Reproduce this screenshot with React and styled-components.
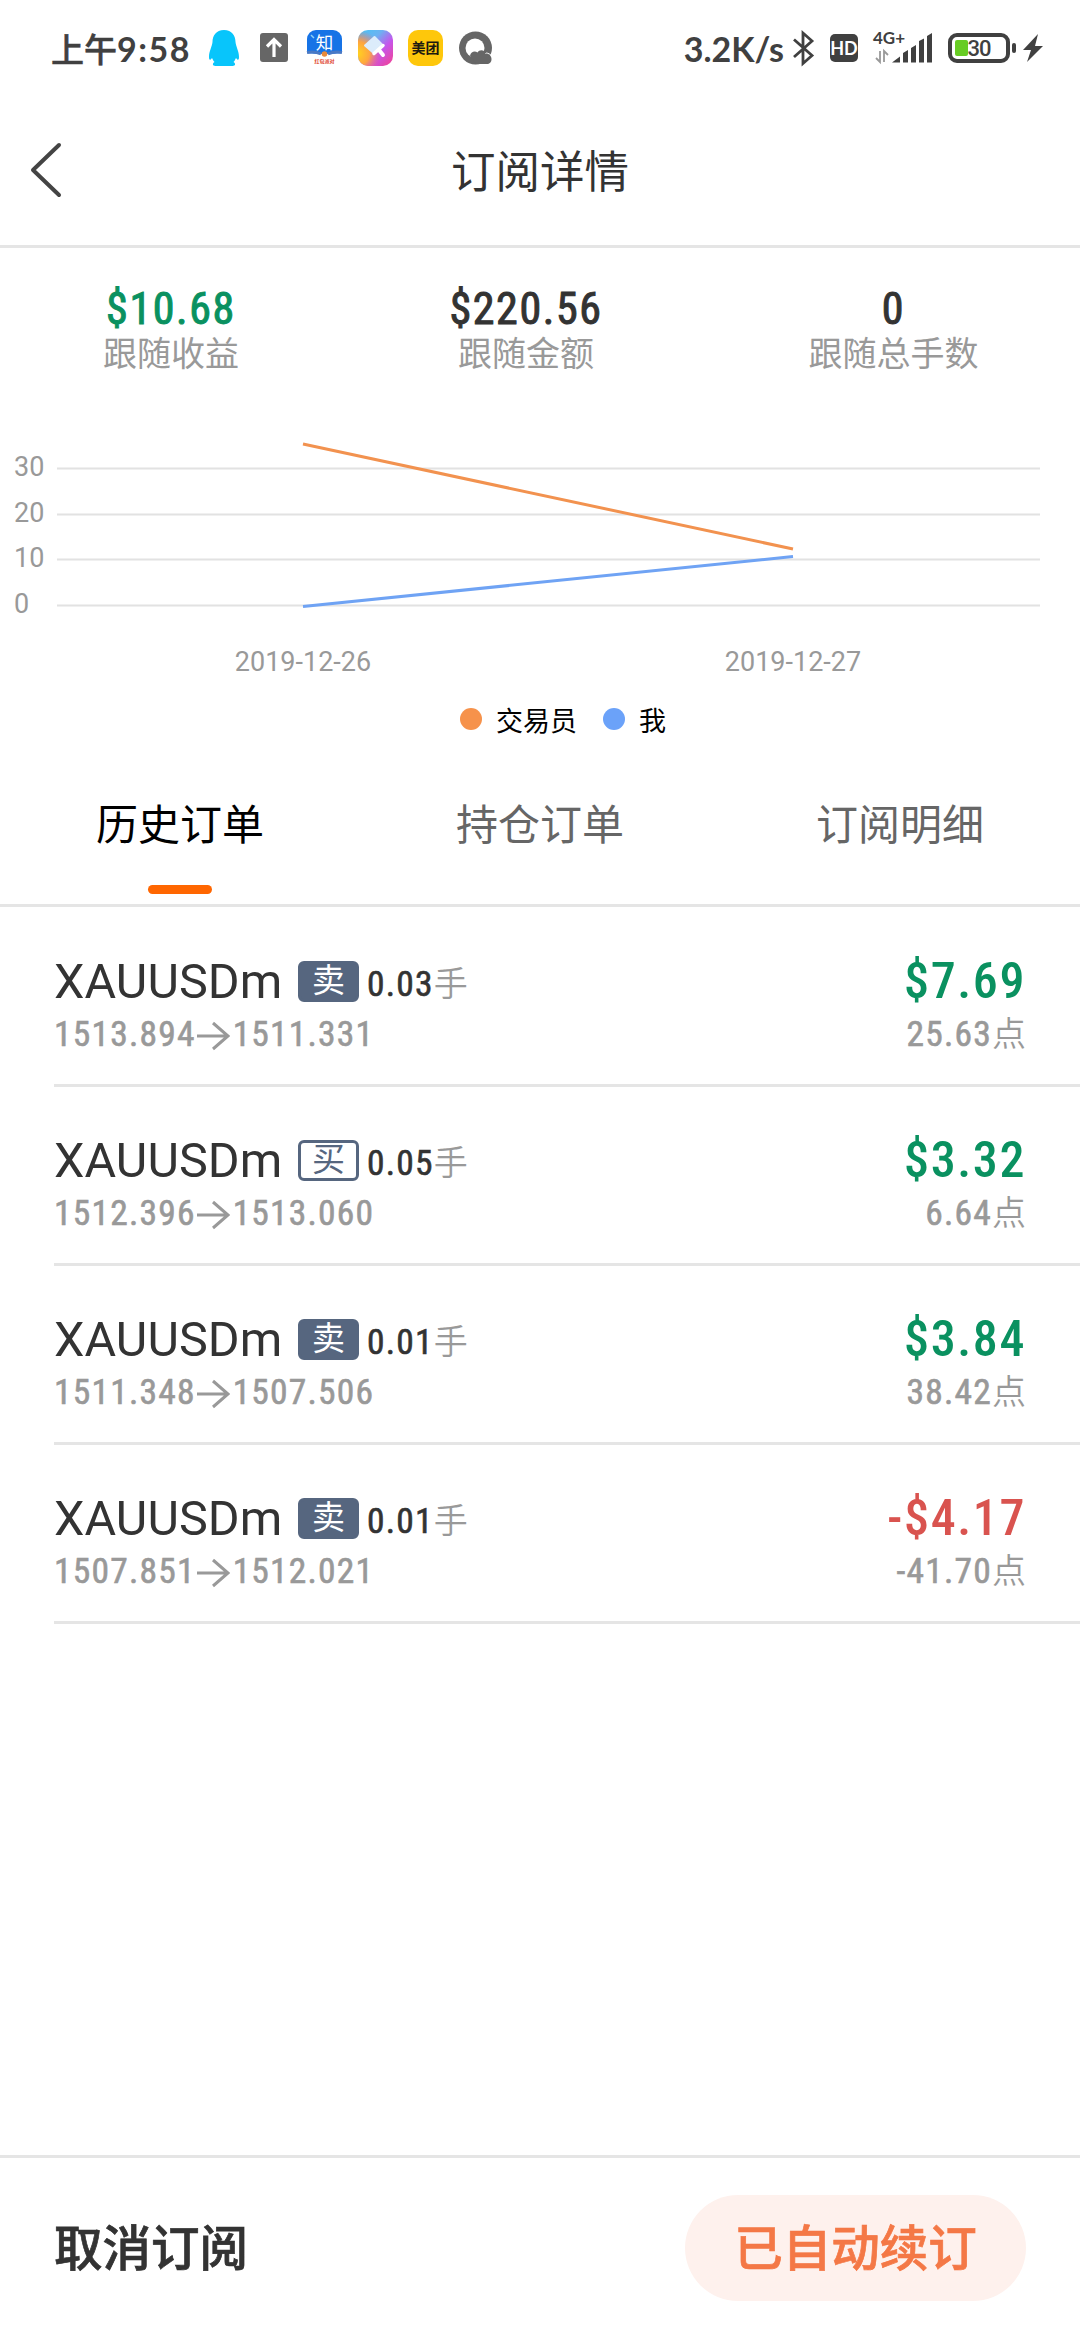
import styled, { createGlobalStyle } from "styled-components";

const GlobalStyle = createGlobalStyle`
  * {
    box-sizing: border-box;
  }

  body {
    margin: 0;
    background: #fff;
    font-family: Roboto, "Noto Sans CJK SC", sans-serif;
    color: #333;
  }
`;

const Page = styled.div`
  display: flex;
  flex-direction: column;
  width: 1080px;
  height: 2340px;
  overflow: hidden;
`;

const StatusBar = styled.div`
  display: flex;
  justify-content: space-between;
  align-items: center;
  height: 96px;
  padding: 0 37px 0 51px;
  font-family: Lato, "Noto Sans CJK SC", sans-serif;
  font-size: 34px;
  font-weight: 700;
  color: #404040;
`;

const StatusGroup = styled.div`
  display: flex;
  align-items: center;
`;

const Clock = styled.span`
  width: 158px;
  white-space: nowrap;
  letter-spacing: 1.5px;

  small {
    font-size: 33px;
    font-weight: 500;
    letter-spacing: 0;
    -webkit-text-stroke: 0.5px currentColor;
  }
`;

const StatusIcon = styled.svg`
  display: block;
  flex: none;
  overflow: visible;
  width: ${(props) => props.$w}px;
  height: ${(props) => props.$h || 36}px;
  margin-left: ${(props) => props.$gap || 0}px;
`;

const Header = styled.div`
  display: grid;
  grid-template-columns: 120px 1fr 120px;
  align-items: center;
  height: 152px;
  padding-bottom: 3px;
  border-bottom: 3px solid #e5e5e5;
`;

const BackIcon = styled.svg`
  width: 40px;
  height: 60px;
  margin: 2px 0 0 26px;
`;

const Title = styled.h1`
  margin: 0 0 2px;
  font-size: 44.5px;
  font-weight: 400;
  text-align: center;
`;

const Number = styled.span`
  font-family: Roboto, "Noto Sans CJK SC", sans-serif;
  font-stretch: 75%;
  font-weight: 400;
  -webkit-text-stroke: 0.6px currentColor;

  small {
    font-size: 34px;
    font-weight: 350;
    letter-spacing: 0;
    color: #999;
    -webkit-text-stroke: 0;
  }
`;

const Stats = styled.div`
  display: grid;
  grid-template-columns: 342px 368px 367px;
  height: 170px;
  padding-top: 36px;
`;

const Stat = styled.div`
  display: flex;
  flex-direction: column;
  align-items: center;
`;

const StatValue = styled(Number)`
  font-size: 44px;
  line-height: 50px;
  letter-spacing: 1.6px;
  -webkit-text-stroke-width: 1px;
  color: ${(props) => props.$color || "#333"};
`;

const StatLabel = styled.span`
  font-size: 34px;
  line-height: 40px;
  color: #999;
`;

const ChartSvg = styled.svg`
  display: block;
  width: 1080px;
  height: 272px;
  font-family: Roboto, sans-serif;
  font-size: 27px;
`;

const Legend = styled.div`
  display: flex;
  justify-content: center;
  align-items: center;
  gap: 26px;
  height: 58px;
  padding-left: 46px;
`;

const LegendItem = styled.div`
  display: flex;
  align-items: center;
  gap: 14px;
  font-size: 27px;
  color: #000;

  &::before {
    content: "";
    width: 22px;
    height: 22px;
    border-radius: 50%;
    background: ${(props) => props.$color};
  }
`;

const Tabs = styled.div`
  display: grid;
  grid-template-columns: repeat(3, 1fr);
  height: 159px;
  border-bottom: 3px solid #e5e5e5;
`;

const Tab = styled.div`
  display: flex;
  flex-direction: column;
  align-items: center;
  justify-content: space-between;
  padding: 48px 0 10px;
  font-size: 42px;
  line-height: 60px;
  color: ${(props) => (props.$active ? "#000" : "#666")};

  &::after {
    content: "";
    width: 64px;
    height: 9px;
    border-radius: 5px;
    background: ${(props) => (props.$active ? "#ff6600" : "transparent")};
  }
`;

const OrderList = styled.div`
  flex: 1;
  padding: 1px 0 0 54px;
`;

const Order = styled.div`
  display: flex;
  justify-content: space-between;
  height: 179px;
  padding: 45px 54px 0 0;
  border-bottom: 3px solid #e5e5e5;
`;

const OrderSide = styled.div`
  display: flex;
  flex-direction: column;
  align-items: ${(props) => (props.$end ? "flex-end" : "flex-start")};
`;

const OrderTop = styled.div`
  display: flex;
  align-items: center;
  height: 56px;
`;

const Symbol = styled.span`
  width: 244px;
  font-size: 48.5px;
  letter-spacing: 0.1px;
`;

const Badge = styled.span`
  display: flex;
  justify-content: center;
  width: 61px;
  height: 41px;
  border: 3px solid #56667f;
  border-radius: 6px;
  font-size: 33px;
  line-height: 33px;
  background: ${(props) => (props.$filled ? "#56667f" : "#fff")};
  color: ${(props) => (props.$filled ? "#fff" : "#56667f")};
`;

const Lots = styled(Number)`
  margin-left: 8px;
  font-size: 35.5px;
  letter-spacing: 1.2px;
`;

const Prices = styled(Number)`
  display: flex;
  align-items: center;
  height: 50px;
  font-size: 35.5px;
  letter-spacing: 1.2px;
  color: #999;
`;

const Arrow = styled.svg`
  width: 34px;
  height: 34px;
  margin: 4px 3px 0 0;
`;

const Profit = styled(Number)`
  font-size: 50px;
  font-weight: 500;
  line-height: 56px;
  letter-spacing: 1.6px;
  -webkit-text-stroke: 0;
  color: ${(props) => (props.$loss ? "#d9534f" : "#0a9160")};
`;

const Points = styled(Number)`
  font-size: 35.5px;
  line-height: 50px;
  letter-spacing: 1.2px;
  color: #999;
`;

const Footer = styled.div`
  display: flex;
  justify-content: space-between;
  align-items: center;
  height: 185px;
  padding: 0 54px 2px;
  border-top: 3px solid #e5e5e5;
  font-size: 48.5px;
  font-weight: 500;
  -webkit-text-stroke: 0.7px currentColor;
`;

const CancelText = styled.span`
  padding-bottom: 6px;
`;

const RenewButton = styled.button`
  width: 341px;
  height: 106px;
  padding: 0 0 6px;
  border: none;
  border-radius: 53px;
  background: #fef1ed;
  font: inherit;
  color: #f47846;
`;

const stats = [
  { label: "跟随收益", value: "$10.68", color: "#0a9160" },
  { label: "跟随金额", value: "$220.56" },
  { label: "跟随总手数", value: "0" },
];

const gridLines = [
  { label: "30", y: 50.5 },
  { label: "20", y: 96.5 },
  { label: "10", y: 141.5 },
  { label: "0", y: 187.5 },
];

const tabs = ["历史订单", "持仓订单", "订阅明细"];

const orders = [
  { side: "卖", lots: "0.03", open: "1513.894", close: "1511.331", profit: "$7.69", points: "25.63" },
  { side: "买", lots: "0.05", open: "1512.396", close: "1513.060", profit: "$3.32", points: "6.64" },
  { side: "卖", lots: "0.01", open: "1511.348", close: "1507.506", profit: "$3.84", points: "38.42" },
  { side: "卖", lots: "0.01", open: "1507.851", close: "1512.021", profit: "-$4.17", points: "-41.70" },
];

const AppIcons = () => (
  <>
    <StatusIcon viewBox="0 0 30 36" $w={30}>
      <path
        d="M15 0C7 0 3.500 6 3.500 12 3 17 0 21 0 27c0 3 1 4 3 1 1 2 1.500 3 2.500 4-2 1-2.500 4 1 4h17c3.500 0 3-3 1-4 1-1 1.500-2 2.500-4 2 3 3 2 3-1 0-6-3-10-3.500-15C26.500 6 23 0 15 0z"
        fill="#08c5fb"
      />
    </StatusIcon>
    <StatusIcon viewBox="0 0 28 30" $w={28} $h={30} $gap={21}>
      <rect width="28" height="29" rx="3" fill="#666" />
      <path d="M14 24V7M7 13.500l7-7 7 7" fill="none" stroke="#fff" strokeWidth="3.200" />
    </StatusIcon>
    <StatusIcon viewBox="0 0 35 36" $w={35} $gap={19}>
      <path d="M9 0h17a9 9 0 0 1 9 9v14l-11 1H11L0 23V9a9 9 0 0 1 9-9z" fill="#1673e6" />
      <path d="M0 22.500q8-1.500 14 1.500M35 22.500q-8-1.500-14 1.500" fill="none" stroke="#4a79c4" strokeWidth="3" />
      <path d="M4 5l3 3" stroke="#8fd0f5" strokeWidth="1.500" />
      <text x="17.500" y="18.500" textAnchor="middle" fontSize="17.500" fontWeight="400" fill="#fff">知</text>
      <circle cx="17.500" cy="24" r="2.800" fill="#e98a3a" />
      <text x="17.500" y="33" textAnchor="middle" fontSize="5" fontWeight="700" fill="#dd3a22">红包派对</text>
    </StatusIcon>
    <StatusIcon viewBox="0 0 35 36" $w={35} $gap={16}>
      <defs>
        <linearGradient id="brushA" x1="0" y1="0" x2="1" y2="1">
          <stop offset="0" stopColor="#45c4f4" />
          <stop offset="0.350" stopColor="#6cb2f2" />
          <stop offset="0.620" stopColor="#c555ec" />
          <stop offset="1" stopColor="#f5408f" />
        </linearGradient>
        <radialGradient id="brushB" cx="0" cy="0.650" r="0.650">
          <stop offset="0" stopColor="#ffd21f" />
          <stop offset="0.500" stopColor="#ffa53f" />
          <stop offset="1" stopColor="#ff6a6a" stopOpacity="0" />
        </radialGradient>
      </defs>
      <rect width="35" height="36" rx="10" fill="url(#brushA)" />
      <rect width="35" height="36" rx="10" fill="url(#brushB)" />
      <path d="M16.500 7L24 14.500 14.500 22 7 15.500z" fill="#dcecfb" stroke="#dcecfb" strokeWidth="2" strokeLinejoin="round" />
      <path d="M25 15.500L16 23.500" stroke="#fff" strokeWidth="3.500" strokeLinecap="round" />
      <path d="M21 20l4 5" stroke="#fff" strokeWidth="4" strokeLinecap="round" />
    </StatusIcon>
    <StatusIcon viewBox="0 0 35 36" $w={35} $gap={15}>
      <rect width="35" height="36" rx="10" fill="#fec70b" />
      <text x="17.500" y="23.200" textAnchor="middle" fontSize="14" fontWeight="700" fill="#1d1a10">美团</text>
    </StatusIcon>
    <StatusIcon viewBox="0 0 34 34" $w={34} $h={34} $gap={16}>
      <circle cx="16.500" cy="17" r="16.500" fill="#666" />
      <circle cx="16" cy="17" r="9.500" fill="#fff" />
      <path d="M11 24.500c1-4 5-5 7.500-3 2-3.500 7.500-2.500 8 1 3 0 6 2 6 5.500s-2 5-4.500 5H17z" fill="#666" />
      <path d="M26.500 22.500q1.500-1.500 6 2" fill="none" stroke="#fff" strokeWidth="1" />
    </StatusIcon>
  </>
);

const SystemIcons = () => (
  <>
    <StatusIcon viewBox="0 0 22 36" $w={22} $gap={9}>
      <path d="M1 9.500l18 16-9 8V3l9 8L1 27" fill="none" stroke="#404040" strokeWidth="2.800" />
    </StatusIcon>
    <StatusIcon viewBox="0 0 28 28" $w={28} $h={28} $gap={15}>
      <rect width="28" height="28" rx="5" fill="#404040" />
      <text x="14" y="20.500" textAnchor="middle" fontSize="18" fill="#fff">HD</text>
    </StatusIcon>
    <StatusIcon viewBox="0 0 60 34" $w={60} $h={34} $gap={15}>
      <text x="0" y="12.500" fontSize="17" fill="#404040">4G+</text>
      <path d="M7 20v11l-4-4M11 31V20l4 4" fill="none" stroke="#999" strokeWidth="1.800" />
      <path d="M19 31.500l8-6v6zM30 22l5-3v12.500h-5zM38 17l5-3v17.500h-5zM46 10l5-2.500v24h-5zM54 5l5-3v29.500h-5z" fill="#404040" />
    </StatusIcon>
    <StatusIcon viewBox="0 0 70 30" $w={70} $h={30} $gap={15}>
      <rect x="2" y="2" width="58" height="26" rx="7" fill="none" stroke="#404040" strokeWidth="4" />
      <rect x="7" y="7" width="13" height="16" rx="2" fill="#67cc23" />
      <rect x="64" y="10" width="4" height="10" rx="2" fill="#404040" />
      <text x="31" y="23" textAnchor="middle" fontFamily="Roboto" fontSize="22" fontWeight="500" letterSpacing="-1" fill="#404040">30</text>
    </StatusIcon>
    <StatusIcon viewBox="0 0 20 30" $w={20} $h={30} $gap={5}>
      <path d="M15 1L0 17h8L4 29 20 13h-8z" fill="#404040" />
    </StatusIcon>
  </>
);

const Chart = () => (
  <ChartSvg viewBox="0 0 1080 272">
    {gridLines.map((line) => (
      <g key={line.label}>
        <path d={`M57 ${line.y}H1040`} stroke="#e2e2e2" strokeWidth="2" />
        <text x="14" y={line.y + 7.5} fill="#999">{line.label}</text>
      </g>
    ))}
    <path d="M303 26L793 131" stroke="#f2924f" strokeWidth="3" />
    <path d="M303 188.500L793 138.500" stroke="#6fa3f4" strokeWidth="3" />
    <text x="303" y="252.500" textAnchor="middle" fill="#999">2019-12-26</text>
    <text x="793" y="252.500" textAnchor="middle" fill="#999">2019-12-27</text>
  </ChartSvg>
);

const OrderRow = ({ order }) => (
  <Order>
    <OrderSide>
      <OrderTop>
        <Symbol>XAUUSDm</Symbol>
        <Badge $filled={order.side === "卖"}>{order.side}</Badge>
        <Lots>{order.lots}<small>手</small></Lots>
      </OrderTop>
      <Prices>
        {order.open}
        <Arrow viewBox="0 0 34 34">
          <path d="M1 17H32M17 4L32 17 17 30" fill="none" stroke="#999" strokeWidth="3" />
        </Arrow>
        {order.close}
      </Prices>
    </OrderSide>
    <OrderSide $end>
      <Profit $loss={order.profit.startsWith("-")}>{order.profit}</Profit>
      <Points>{order.points}<small>点</small></Points>
    </OrderSide>
  </Order>
);

const App = () => (
  <Page>
    <GlobalStyle />
    <StatusBar>
      <StatusGroup>
        <Clock><small>上午</small>9:58</Clock>
        <AppIcons />
      </StatusGroup>
      <StatusGroup>
        <span>3.2K/s</span>
        <SystemIcons />
      </StatusGroup>
    </StatusBar>
    <Header>
      <BackIcon viewBox="0 0 40 60">
        <path d="M33 5L7 30l26 25" fill="none" stroke="#444" strokeWidth="4" strokeLinecap="round" strokeLinejoin="round" />
      </BackIcon>
      <Title>订阅详情</Title>
    </Header>
    <Stats>
      {stats.map((stat) => (
        <Stat key={stat.label}>
          <StatValue $color={stat.color}>{stat.value}</StatValue>
          <StatLabel>{stat.label}</StatLabel>
        </Stat>
      ))}
    </Stats>
    <Chart />
    <Legend>
      <LegendItem $color="#f6924b">交易员</LegendItem>
      <LegendItem $color="#6ba2f9">我</LegendItem>
    </Legend>
    <Tabs>
      {tabs.map((tab, i) => (
        <Tab key={tab} $active={i === 0}>{tab}</Tab>
      ))}
    </Tabs>
    <OrderList>
      {orders.map((order) => (
        <OrderRow key={order.open} order={order} />
      ))}
    </OrderList>
    <Footer>
      <CancelText>取消订阅</CancelText>
      <RenewButton>已自动续订</RenewButton>
    </Footer>
  </Page>
);

export default App;
